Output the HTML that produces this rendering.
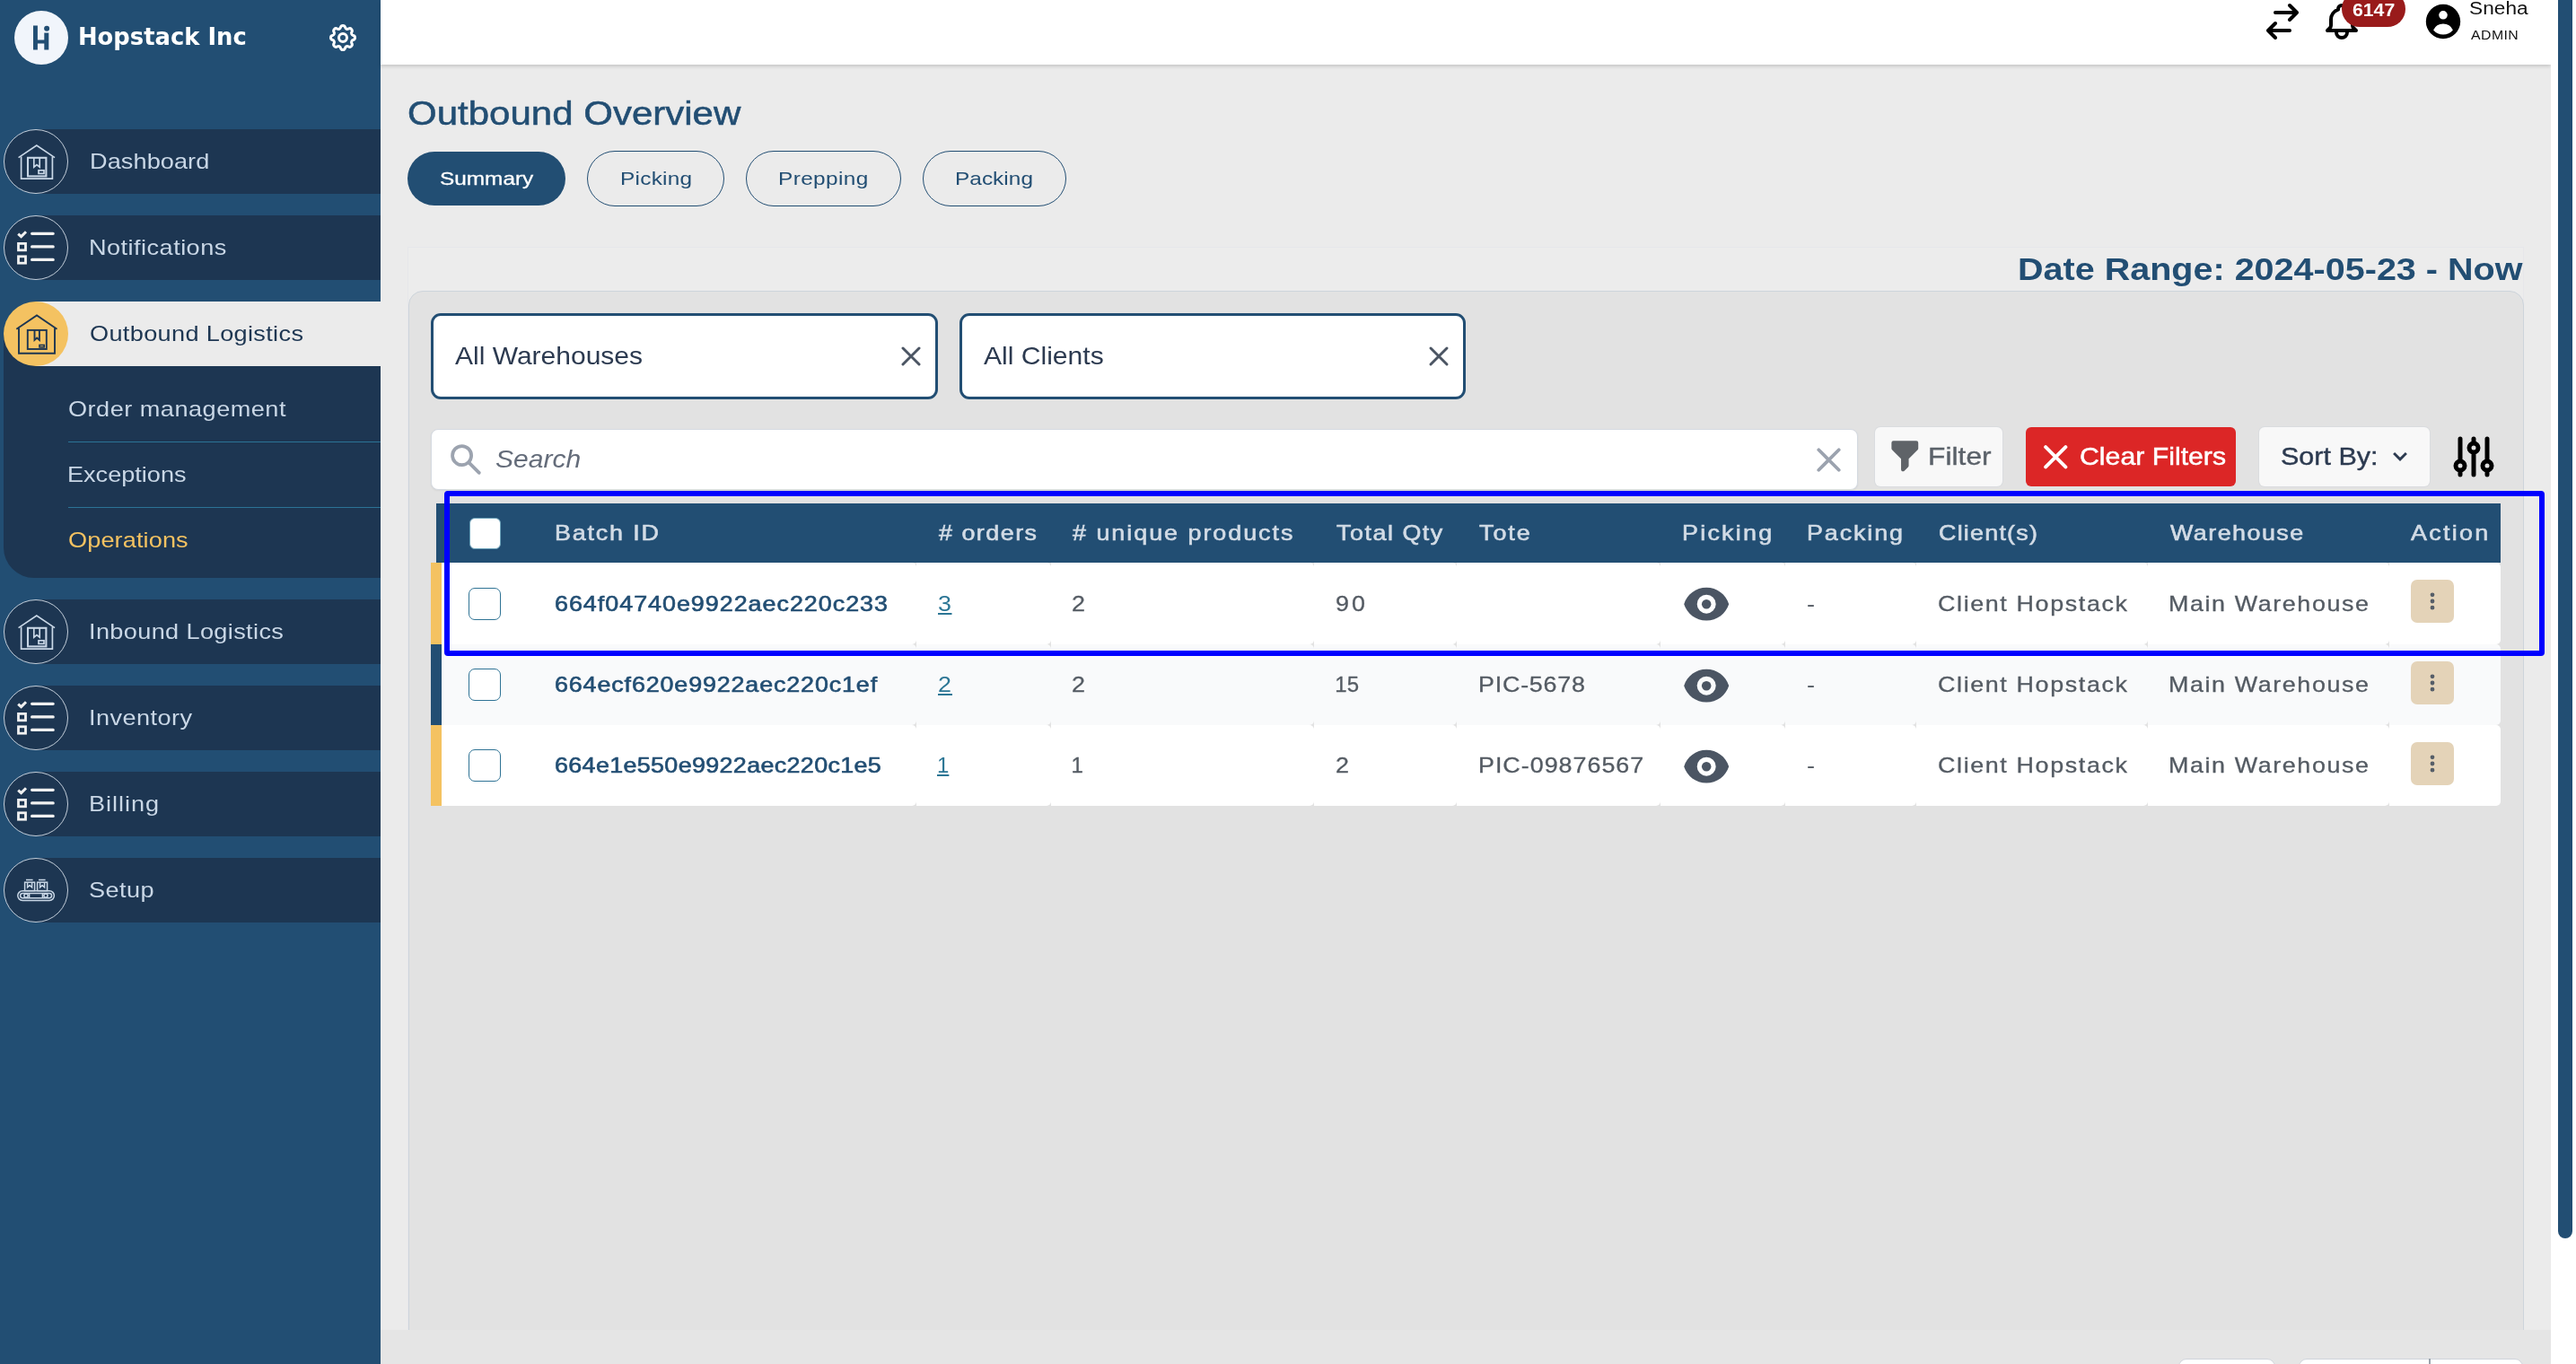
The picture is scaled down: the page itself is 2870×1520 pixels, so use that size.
<!DOCTYPE html>
<html lang="en"><head><meta charset="utf-8"><title>Outbound Overview - Hopstack Inc</title>
<style>
html,body{margin:0;padding:0}
body{width:2870px;height:1520px;overflow:hidden;background:#fff;position:relative;font-family:"Liberation Sans",sans-serif}
.a,.t,svg.i{position:absolute}
.t{white-space:nowrap;line-height:1;transform-origin:0 50%}
.a{box-sizing:border-box}
svg.i{overflow:visible}
#app{position:absolute;left:0;top:0;width:2870px;height:1520px;overflow:hidden;will-change:transform}
@media (max-width:2000px){#app{zoom:.5}body{width:1435px;height:760px}}

</style></head>
<body>
<div id="app">
<div class="a" style="left:424px;top:0;width:2418px;height:1520px;background:#ebebeb"></div>
<div class="a" style="left:0;top:0;width:424px;height:1520px;background:#224e73"></div>
<div class="a" style="left:16px;top:12px;width:60px;height:60px;border-radius:50%;background:#f1f5fb"></div>
<svg class="i" style="left:16px;top:12px" width="60" height="60" viewBox="16 12 60 60"><g fill="#224e73"><rect x="37" y="28.5" width="4.9" height="27"/><rect x="49.3" y="36.6" width="5" height="18.9"/><rect x="41" y="44.5" width="9" height="4"/><circle cx="52.1" cy="31.7" r="3"/></g></svg>
<span class="t" style="left:87.0px;top:26.9px;font-size:27px;color:#fff;font-family:'DejaVu Sans','Liberation Sans',sans-serif;font-weight:700;transform:scaleX(0.9562);">Hopstack Inc</span>
<svg class="i" style="left:364px;top:24px" width="36" height="36" viewBox="0 0 24 24" fill="none" stroke="#fff" stroke-width="2" stroke-linecap="round" stroke-linejoin="round"><path d="M10.325 4.317c.426-1.756 2.924-1.756 3.35 0a1.724 1.724 0 002.573 1.066c1.543-.94 3.31.826 2.37 2.37a1.724 1.724 0 001.065 2.572c1.756.426 1.756 2.924 0 3.35a1.724 1.724 0 00-1.066 2.573c.94 1.543-.826 3.31-2.37 2.37a1.724 1.724 0 00-2.572 1.065c-.426 1.756-2.924 1.756-3.35 0a1.724 1.724 0 00-2.573-1.066c-1.543.94-3.31-.826-2.37-2.37a1.724 1.724 0 00-1.065-2.572c-1.756-.426-1.756-2.924 0-3.35a1.724 1.724 0 001.066-2.573c-.94-1.543.826-3.31 2.37-2.37.996.608 2.296.07 2.572-1.065z"/><path d="M15 12a3 3 0 11-6 0 3 3 0 016 0z"/></svg>
<div class="a" style="left:40px;top:144px;width:384px;height:72px;background:#1d3652"></div>
<div class="a" style="left:4px;top:144px;width:72px;height:72px;border-radius:50%;background:#1d3652;border:1.4px solid #c4cfdb"></div>
<svg class="i" style="left:4px;top:144px" width="72" height="72" viewBox="4 144 72 72" fill="none" stroke="#c9d7e6" stroke-width="1.7" stroke-linejoin="miter"><g><path d="M20.6 175.6L40.8 162L61 175.6"/><path d="M23.6 174.5V199.2H58.4V174.5"/><rect x="31" y="175.8" width="20.4" height="20.6" stroke-width="2.1"/><path d="M37.8 176V186.2L41 183.6L44.2 186.2V176"/><rect x="43" y="189.8" width="6" height="3.6"/></g></svg>
<span class="t" style="left:99.7px;top:167.6px;font-size:24px;color:#c9d7e6;font-family:'Liberation Sans',sans-serif;letter-spacing:0.07px;transform:scaleX(1.1300);">Dashboard</span>
<div class="a" style="left:40px;top:240px;width:384px;height:72px;background:#1d3652"></div>
<div class="a" style="left:4px;top:240px;width:72px;height:72px;border-radius:50%;background:#1d3652;border:1.4px solid #c4cfdb"></div>
<svg class="i" style="left:4px;top:240px" width="72" height="72" viewBox="4 240 72 72" fill="none" stroke="#f1f1f1" stroke-linecap="round"><g stroke-width="3.2"><path d="M35.6 260.3H59.2M35.6 274.9H59.2M35.6 289.4H59.2"/></g><path d="M20.2 260.6L23.6 263.6L29 258.2" stroke-width="3" stroke-linecap="butt"/><rect x="20.5" y="271.4" width="8" height="7.4" stroke-width="2.8"/><rect x="20.5" y="285.8" width="8" height="7.4" stroke-width="2.8"/></svg>
<span class="t" style="left:99.3px;top:263.6px;font-size:24px;color:#c9d7e6;font-family:'Liberation Sans',sans-serif;letter-spacing:0.41px;transform:scaleX(1.1300);">Notifications</span>
<div class="a" style="left:4px;top:372px;width:420px;height:272px;background:#1d3652;border-bottom-left-radius:34px"></div>
<div class="a" style="left:40px;top:336px;width:384px;height:72px;background:#ebebeb"></div>
<div class="a" style="left:4px;top:336px;width:72px;height:72px;border-radius:50%;background:#f4c261"></div>
<svg class="i" style="left:4px;top:336px" width="72" height="72" viewBox="4 336 72 72" fill="none" stroke="#1d3652" stroke-width="1.9" stroke-linejoin="miter"><path d="M18.3 366.7L41 351.4L63.5 366.7"/><path d="M21 365.6V393.8H61V365.6"/><rect x="30.8" y="367.9" width="21" height="21.1"/><path d="M38.5 368V378.9L41.2 376.5L43.9 378.9V368"/><rect x="44" y="384.5" width="5.2" height="2.4" stroke-width="1.6"/></svg>
<span class="t" style="left:99.8px;top:359.6px;font-size:24px;color:#1d3652;font-family:'Liberation Sans',sans-serif;letter-spacing:0.30px;transform:scaleX(1.1300);">Outbound Logistics</span>
<span class="t" style="left:75.7px;top:443.7px;font-size:24px;color:#c9d7e6;font-family:'Liberation Sans',sans-serif;letter-spacing:0.43px;transform:scaleX(1.1300);">Order management</span>
<span class="t" style="left:75.4px;top:516.7px;font-size:24px;color:#c9d7e6;font-family:'Liberation Sans',sans-serif;transform:scaleX(1.1286);">Exceptions</span>
<span class="t" style="left:75.7px;top:589.7px;font-size:24px;color:#f4c261;font-family:'Liberation Sans',sans-serif;letter-spacing:0.10px;transform:scaleX(1.1300);">Operations</span>
<div class="a" style="left:76px;top:491.8px;width:348px;height:1.6px;background:#2b7396"></div>
<div class="a" style="left:76px;top:564.8px;width:348px;height:1.6px;background:#2b7396"></div>
<div class="a" style="left:40px;top:668px;width:384px;height:72px;background:#1d3652"></div>
<div class="a" style="left:4px;top:668px;width:72px;height:72px;border-radius:50%;background:#1d3652;border:1.4px solid #c4cfdb"></div>
<svg class="i" style="left:4px;top:668px" width="72" height="72" viewBox="4 668 72 72" fill="none" stroke="#c9d7e6" stroke-width="1.7" stroke-linejoin="miter"><g><path d="M20.6 699.6L40.8 686L61 699.6"/><path d="M23.6 698.5V723.2H58.4V698.5"/><rect x="31" y="699.8" width="20.4" height="20.6" stroke-width="2.1"/><path d="M37.8 700V710.2L41 707.6L44.2 710.2V700"/><rect x="43" y="713.8" width="6" height="3.6"/></g></svg>
<span class="t" style="left:98.8px;top:691.6px;font-size:24px;color:#c9d7e6;font-family:'Liberation Sans',sans-serif;letter-spacing:0.32px;transform:scaleX(1.1300);">Inbound Logistics</span>
<div class="a" style="left:40px;top:764px;width:384px;height:72px;background:#1d3652"></div>
<div class="a" style="left:4px;top:764px;width:72px;height:72px;border-radius:50%;background:#1d3652;border:1.4px solid #c4cfdb"></div>
<svg class="i" style="left:4px;top:764px" width="72" height="72" viewBox="4 764 72 72" fill="none" stroke="#f1f1f1" stroke-linecap="round"><g stroke-width="3.2"><path d="M35.6 784.3H59.2M35.6 798.9H59.2M35.6 813.4H59.2"/></g><path d="M20.2 784.6L23.6 787.6L29 782.2" stroke-width="3" stroke-linecap="butt"/><rect x="20.5" y="795.4" width="8" height="7.4" stroke-width="2.8"/><rect x="20.5" y="809.8" width="8" height="7.4" stroke-width="2.8"/></svg>
<span class="t" style="left:98.8px;top:787.6px;font-size:24px;color:#c9d7e6;font-family:'Liberation Sans',sans-serif;letter-spacing:0.38px;transform:scaleX(1.1300);">Inventory</span>
<div class="a" style="left:40px;top:860px;width:384px;height:72px;background:#1d3652"></div>
<div class="a" style="left:4px;top:860px;width:72px;height:72px;border-radius:50%;background:#1d3652;border:1.4px solid #c4cfdb"></div>
<svg class="i" style="left:4px;top:860px" width="72" height="72" viewBox="4 860 72 72" fill="none" stroke="#f1f1f1" stroke-linecap="round"><g stroke-width="3.2"><path d="M35.6 880.3H59.2M35.6 894.9H59.2M35.6 909.4H59.2"/></g><path d="M20.2 880.6L23.6 883.6L29 878.2" stroke-width="3" stroke-linecap="butt"/><rect x="20.5" y="891.4" width="8" height="7.4" stroke-width="2.8"/><rect x="20.5" y="905.8" width="8" height="7.4" stroke-width="2.8"/></svg>
<span class="t" style="left:99.0px;top:883.6px;font-size:24px;color:#c9d7e6;font-family:'Liberation Sans',sans-serif;letter-spacing:0.86px;transform:scaleX(1.1300);">Billing</span>
<div class="a" style="left:40px;top:956px;width:384px;height:72px;background:#1d3652"></div>
<div class="a" style="left:4px;top:956px;width:72px;height:72px;border-radius:50%;background:#1d3652;border:1.4px solid #c4cfdb"></div>
<svg class="i" style="left:4px;top:956px" width="72" height="72" viewBox="4 956 72 72" fill="none" stroke="#c9d7e6" stroke-width="1.5"><rect x="19.8" y="992.8" width="40.6" height="10.6" rx="5.3"/><rect x="22.6" y="995.4" width="35" height="5.4" rx="2.7"/><circle cx="29" cy="998.1" r="2.1"/><circle cx="51" cy="998.1" r="2.1"/><path d="M32.6 995.4V1000.8M47.4 995.4V1000.8"/><rect x="27.6" y="983.2" width="11" height="9.4"/><rect x="41.6" y="983.2" width="11" height="9.4"/><path d="M30.6 983.4V988.8L33.1 986.6L35.6 988.8V983.4M44.6 983.4V988.8L47.1 986.6L49.6 988.8V983.4"/><path d="M29 980.6H36.6M43 980.6H50.6"/></svg>
<span class="t" style="left:99.4px;top:979.6px;font-size:24px;color:#c9d7e6;font-family:'Liberation Sans',sans-serif;letter-spacing:0.39px;transform:scaleX(1.1300);">Setup</span>
<div class="a" style="left:424px;top:0;width:2418px;height:72px;background:#fff;box-shadow:0 2px 4px rgba(0,0,0,.16)"></div>
<svg class="i" style="left:2519px;top:0" width="48" height="48" viewBox="0 0 24 24" fill="none" stroke="#000" stroke-width="2" stroke-linecap="round" stroke-linejoin="round"><path d="M8 7h12m0 0l-4-4m4 4l-4 4m0 6H4m0 0l4 4m-4-4l4-4"/></svg>
<svg class="i" style="left:2585px;top:0" width="48" height="48" viewBox="0 0 24 24" fill="none" stroke="#000" stroke-width="2" stroke-linecap="round" stroke-linejoin="round"><path d="M15 17h5l-1.405-1.405A2.032 2.032 0 0118 14.158V11a6.002 6.002 0 00-4-5.659V5a2 2 0 10-4 0v.341C7.67 6.165 6 8.388 6 11v3.159c0 .538-.214 1.055-.595 1.436L4 17h5m6 0v1a3 3 0 11-6 0v-1m6 0H9"/></svg>
<div class="a" style="left:2609px;top:-10px;width:71px;height:40px;border-radius:20px;background:#991b1b"></div>
<span class="t" style="left:2620.8px;top:1.4px;font-size:20px;color:#fff;font-family:'Liberation Sans',sans-serif;font-weight:700;transform:scaleX(1.0606);">6147</span>
<svg class="i" style="left:2698px;top:0" width="48" height="48" viewBox="0 0 20 20" fill="#000"><path fill-rule="evenodd" clip-rule="evenodd" d="M18 10a8 8 0 11-16 0 8 8 0 0116 0zm-6-3a2 2 0 11-4 0 2 2 0 014 0zm-2 4a5 5 0 00-4.546 2.916A5.986 5.986 0 0010 16a5.986 5.986 0 004.546-2.084A5 5 0 0010 11z"/></svg>
<span class="t" style="left:2751.0px;top:-0.9px;font-size:20px;color:#111;font-family:'Liberation Sans',sans-serif;letter-spacing:0.05px;transform:scaleX(1.1300);">Sneha</span>
<span class="t" style="left:2752.5px;top:31.9px;font-size:14px;color:#111;font-family:'Liberation Sans',sans-serif;letter-spacing:0.40px;transform:scaleX(1.1300);">ADMIN</span>
<div class="a" style="left:2842px;top:0;width:28px;height:1520px;background:#fff"></div>
<div class="a" style="left:2850px;top:-20px;width:16px;height:1400px;border-radius:8px;background:#224e73"></div>
<span class="t" style="left:453.9px;top:109.1px;font-size:36px;color:#224e73;font-family:'Liberation Sans',sans-serif;transform:scaleX(1.1670);-webkit-text-stroke:0.5px #224e73;">Outbound Overview</span>
<div class="a" style="left:454px;top:169px;width:176px;height:60px;border-radius:30px;background:#224e73"></div>
<span class="t" style="left:489.6px;top:188.1px;font-size:21px;color:#fff;font-family:'Liberation Sans',sans-serif;letter-spacing:0.01px;transform:scaleX(1.1600);-webkit-text-stroke:0.3px #fff;">Summary</span>
<div class="a" style="left:654px;top:168px;width:153px;height:62px;border-radius:31px;border:1.5px solid #224e73"></div>
<span class="t" style="left:690.5px;top:188.1px;font-size:21px;color:#224e73;font-family:'Liberation Sans',sans-serif;letter-spacing:0.23px;transform:scaleX(1.1600);">Picking</span>
<div class="a" style="left:831px;top:168px;width:173px;height:62px;border-radius:31px;border:1.5px solid #224e73"></div>
<span class="t" style="left:867.1px;top:188.1px;font-size:21px;color:#224e73;font-family:'Liberation Sans',sans-serif;letter-spacing:0.34px;transform:scaleX(1.1600);">Prepping</span>
<div class="a" style="left:1028px;top:168px;width:159.5px;height:62px;border-radius:31px;border:1.5px solid #224e73"></div>
<span class="t" style="left:1063.8px;top:188.1px;font-size:21px;color:#224e73;font-family:'Liberation Sans',sans-serif;letter-spacing:0.04px;transform:scaleX(1.1600);">Packing</span>
<div class="a" style="left:454px;top:275px;width:2358px;height:1260px;border:1px solid #e6e7ea;background:#ececec"></div>
<span class="t" style="left:2248.4px;top:282.9px;font-size:35.5px;color:#224e73;font-family:'Liberation Sans',sans-serif;font-weight:700;transform:scaleX(1.1136);">Date Range: 2024-05-23 - Now</span>
<div class="a" style="left:455px;top:324px;width:2356.5px;height:1200px;border:1px solid #cdd4db;border-radius:16px;background:#e2e2e2"></div>
<div class="a" style="left:480px;top:349px;width:565px;height:96px;border:3.4px solid #224e73;border-radius:11px;background:#fff"></div>
<span class="t" style="left:507.0px;top:383.2px;font-size:28px;color:#2c3a50;font-family:'Liberation Sans',sans-serif;transform:scaleX(1.0719);">All Warehouses</span>
<svg class="i" style="left:997.2px;top:379.4px" width="36" height="36" viewBox="0 0 24 24" fill="none" stroke="#4b5563" stroke-width="2" stroke-linecap="round" stroke-linejoin="round"><path d="M6 18L18 6M6 6l12 12"/></svg>
<div class="a" style="left:1069px;top:349px;width:564px;height:96px;border:3.4px solid #224e73;border-radius:11px;background:#fff"></div>
<span class="t" style="left:1095.7px;top:383.2px;font-size:28px;color:#2c3a50;font-family:'Liberation Sans',sans-serif;transform:scaleX(1.0739);">All Clients</span>
<svg class="i" style="left:1584.9px;top:379.4px" width="36" height="36" viewBox="0 0 24 24" fill="none" stroke="#4b5563" stroke-width="2" stroke-linecap="round" stroke-linejoin="round"><path d="M6 18L18 6M6 6l12 12"/></svg>
<div class="a" style="left:480px;top:477.5px;width:1590px;height:68.5px;border:1px solid #d5dae1;border-radius:8px;background:#fff;box-shadow:0 1px 2px rgba(0,0,0,.06)"></div>
<svg class="i" style="left:499px;top:492px" width="40" height="40" viewBox="499 492 40 40" fill="none" stroke="#9ca3af" stroke-width="3.8" stroke-linecap="round"><circle cx="514.6" cy="507.6" r="10.5"/><path d="M522.3 515.3L533.8 526.8"/></svg>
<span class="t" style="left:552.4px;top:497.9px;font-size:28px;color:#646c7a;font-family:'Liberation Sans',sans-serif;font-style:italic;transform:scaleX(1.0723);">Search</span>
<svg class="i" style="left:2014.5px;top:489.5px" width="45" height="45" viewBox="0 0 24 24" fill="none" stroke="#9ca3af" stroke-width="2" stroke-linecap="round" stroke-linejoin="round"><path d="M6 18L18 6M6 6l12 12"/></svg>
<div class="a" style="left:2089px;top:476px;width:142px;height:66px;border-radius:6px;background:#f8f8f8;box-shadow:0 0 0 1px rgba(150,170,200,.1)"></div>
<svg class="i" style="left:2100.7px;top:487.4px" width="42.6" height="42.6" viewBox="0 0 20 20" fill="#5f6368"><path fill-rule="evenodd" clip-rule="evenodd" d="M3 3a1 1 0 011-1h12a1 1 0 011 1v3a1 1 0 01-.293.707L12 11.414V15a1 1 0 01-.293.707l-2 2A1 1 0 018 17v-5.586L3.293 6.707A1 1 0 013 6V3z"/></svg>
<span class="t" style="left:2148.2px;top:494.7px;font-size:28px;color:#5a6169;font-family:'Liberation Sans',sans-serif;letter-spacing:0.05px;transform:scaleX(1.1300);-webkit-text-stroke:0.4px #5a6169;">Filter</span>
<div class="a" style="left:2257px;top:476px;width:234px;height:66px;border-radius:6px;background:#dc2626"></div>
<svg class="i" style="left:2267.75px;top:486.75px" width="44.5" height="44.5" viewBox="0 0 24 24" fill="none" stroke="#fff" stroke-width="2.1" stroke-linecap="round" stroke-linejoin="round"><path d="M6 18L18 6M6 6l12 12"/></svg>
<span class="t" style="left:2316.7px;top:494.6px;font-size:28px;color:#fff;font-family:'Liberation Sans',sans-serif;transform:scaleX(1.0805);-webkit-text-stroke:0.5px #fff;">Clear Filters</span>
<div class="a" style="left:2517px;top:476px;width:190px;height:66px;border-radius:6px;background:#f8f8f8;box-shadow:0 0 0 1px rgba(150,170,200,.1)"></div>
<span class="t" style="left:2540.8px;top:494.7px;font-size:28px;color:#2c3a50;font-family:'Liberation Sans',sans-serif;transform:scaleX(1.0894);-webkit-text-stroke:0.4px #2c3a50;">Sort By:</span>
<svg class="i" style="left:2660px;top:498px" width="28" height="22" viewBox="2660 498 28 22" fill="none" stroke="#2c3a50" stroke-width="2.9" stroke-linecap="butt" stroke-linejoin="miter"><path d="M2667.1 505 L2674 511.9 L2680.9 505"/></svg>
<svg class="i" style="left:2725.8px;top:478.8px" width="60" height="60" viewBox="0 0 24 24" fill="none" stroke="#000" stroke-width="2" stroke-linecap="round" stroke-linejoin="round"><path d="M12 6V4m0 2a2 2 0 100 4m0-4a2 2 0 110 4m-6 8a2 2 0 100-4m0 4a2 2 0 110-4m0 4v2m0-6V4m6 6v10m6-2a2 2 0 100-4m0 4a2 2 0 110-4m0 4v2m0-6V4"/></svg>
<div class="a" style="left:486px;top:561px;width:2300px;height:66px;background:#224e73"></div>
<div class="a" style="left:522.5px;top:576.5px;width:35px;height:35px;border-radius:6px;background:#fff;border:1px solid #6aa0b8"></div>
<span class="t" style="left:617.6px;top:581.5px;font-size:24px;color:#d3dce6;font-family:'Liberation Sans',sans-serif;letter-spacing:1.63px;transform:scaleX(1.1200);-webkit-text-stroke:0.6px #d3dce6;">Batch ID</span>
<span class="t" style="left:1046.2px;top:581.5px;font-size:24px;color:#d3dce6;font-family:'Liberation Sans',sans-serif;letter-spacing:1.33px;transform:scaleX(1.1200);-webkit-text-stroke:0.6px #d3dce6;"># orders</span>
<span class="t" style="left:1195.2px;top:581.5px;font-size:24px;color:#d3dce6;font-family:'Liberation Sans',sans-serif;letter-spacing:1.77px;transform:scaleX(1.1200);-webkit-text-stroke:0.6px #d3dce6;"># unique products</span>
<span class="t" style="left:1488.7px;top:581.5px;font-size:24px;color:#d3dce6;font-family:'Liberation Sans',sans-serif;letter-spacing:1.36px;transform:scaleX(1.1200);-webkit-text-stroke:0.6px #d3dce6;">Total Qty</span>
<span class="t" style="left:1647.8px;top:581.5px;font-size:24px;color:#d3dce6;font-family:'Liberation Sans',sans-serif;letter-spacing:1.75px;transform:scaleX(1.1200);-webkit-text-stroke:0.6px #d3dce6;">Tote</span>
<span class="t" style="left:1874.3px;top:581.5px;font-size:24px;color:#d3dce6;font-family:'Liberation Sans',sans-serif;letter-spacing:2.01px;transform:scaleX(1.1200);-webkit-text-stroke:0.6px #d3dce6;">Picking</span>
<span class="t" style="left:2013.2px;top:581.5px;font-size:24px;color:#d3dce6;font-family:'Liberation Sans',sans-serif;letter-spacing:1.68px;transform:scaleX(1.1200);-webkit-text-stroke:0.6px #d3dce6;">Packing</span>
<span class="t" style="left:2159.6px;top:581.5px;font-size:24px;color:#d3dce6;font-family:'Liberation Sans',sans-serif;letter-spacing:1.10px;transform:scaleX(1.1200);-webkit-text-stroke:0.6px #d3dce6;">Client(s)</span>
<span class="t" style="left:2418.2px;top:581.5px;font-size:24px;color:#d3dce6;font-family:'Liberation Sans',sans-serif;letter-spacing:1.31px;transform:scaleX(1.1200);-webkit-text-stroke:0.6px #d3dce6;">Warehouse</span>
<span class="t" style="left:2686.2px;top:581.5px;font-size:24px;color:#d3dce6;font-family:'Liberation Sans',sans-serif;letter-spacing:2.04px;transform:scaleX(1.1200);-webkit-text-stroke:0.6px #d3dce6;">Action</span>
<div class="a" style="left:480px;top:627px;width:12px;height:90.5px;background:#f4c261"></div>
<div class="a" style="left:492px;top:627px;width:529px;height:90.5px;background:#fff;border-radius:0 5px 5px 0"></div>
<div class="a" style="left:1021px;top:627px;width:149.5px;height:90.5px;background:#fff;border-radius:0 5px 5px 0"></div>
<div class="a" style="left:1170.5px;top:627px;width:293.5px;height:90.5px;background:#fff;border-radius:0 5px 5px 0"></div>
<div class="a" style="left:1464px;top:627px;width:159px;height:90.5px;background:#fff;border-radius:0 5px 5px 0"></div>
<div class="a" style="left:1623px;top:627px;width:227px;height:90.5px;background:#fff;border-radius:0 5px 5px 0"></div>
<div class="a" style="left:1850px;top:627px;width:139px;height:90.5px;background:#fff;border-radius:0 5px 5px 0"></div>
<div class="a" style="left:1989px;top:627px;width:146px;height:90.5px;background:#fff;border-radius:0 5px 5px 0"></div>
<div class="a" style="left:2135px;top:627px;width:257.5px;height:90.5px;background:#fff;border-radius:0 5px 5px 0"></div>
<div class="a" style="left:2392.5px;top:627px;width:269.0px;height:90.5px;background:#fff;border-radius:0 5px 5px 0"></div>
<div class="a" style="left:2661.5px;top:627px;width:124.5px;height:90.5px;background:#fff;border-radius:0 5px 5px 0"></div>
<div class="a" style="left:522px;top:654.5px;width:36px;height:36px;border-radius:7px;background:#fff;border:1.5px solid #2f7395"></div>
<span class="t" style="left:617.8px;top:660.9px;font-size:24px;color:#224e73;font-family:'Liberation Sans',sans-serif;letter-spacing:0.88px;transform:scaleX(1.1200);-webkit-text-stroke:0.6px #224e73;">664f04740e9922aec220c233</span>
<span class="t" style="left:1044.8px;top:660.9px;font-size:24px;color:#2c7695;font-family:'Liberation Sans',sans-serif;letter-spacing:0.47px;transform:scaleX(1.1200);text-decoration:underline;text-decoration-thickness:2px;text-underline-offset:2px;">3</span>
<span class="t" style="left:1193.8px;top:660.9px;font-size:24px;color:#545b63;font-family:'Liberation Sans',sans-serif;letter-spacing:0.63px;transform:scaleX(1.1200);-webkit-text-stroke:0.3px #545b63;">2</span>
<span class="t" style="left:1487.8px;top:660.9px;font-size:24px;color:#545b63;font-family:'Liberation Sans',sans-serif;letter-spacing:2.75px;transform:scaleX(1.1200);-webkit-text-stroke:0.3px #545b63;">90</span>
<svg class="i" style="left:1875px;top:647.1px" width="52.4" height="52.4" viewBox="0 0 20 20" fill="#4b5563"><path d="M10 12a2 2 0 100-4 2 2 0 000 4z"/><path fill-rule="evenodd" clip-rule="evenodd" d="M.458 10C1.732 5.943 5.522 3 10 3s8.268 2.943 9.542 7c-1.274 4.057-5.064 7-9.542 7S1.732 14.057.458 10zM14 10a4 4 0 11-8 0 4 4 0 018 0z"/></svg>
<span class="t" style="left:2013.3px;top:660.9px;font-size:24px;color:#545b63;font-family:'Liberation Sans',sans-serif;letter-spacing:0.70px;transform:scaleX(1.1300);">-</span>
<span class="t" style="left:2159.2px;top:660.9px;font-size:24px;color:#545b63;font-family:'Liberation Sans',sans-serif;letter-spacing:1.45px;transform:scaleX(1.1200);-webkit-text-stroke:0.3px #545b63;">Client Hopstack</span>
<span class="t" style="left:2416.0px;top:660.9px;font-size:24px;color:#545b63;font-family:'Liberation Sans',sans-serif;letter-spacing:1.43px;transform:scaleX(1.1200);-webkit-text-stroke:0.3px #545b63;">Main Warehouse</span>
<div class="a" style="left:2686px;top:646.0px;width:48px;height:48px;border-radius:7px;background:#e4d3b8"></div>
<svg class="i" style="left:2698px;top:658.0px" width="24" height="24" viewBox="0 0 20 20" fill="#565e68"><path d="M10 6a2 2 0 110-4 2 2 0 010 4zM10 12a2 2 0 110-4 2 2 0 010 4zM10 18a2 2 0 110-4 2 2 0 010 4z"/></svg>
<div class="a" style="left:480px;top:717.5px;width:12px;height:90.5px;background:#224e73"></div>
<div class="a" style="left:492px;top:717.5px;width:529px;height:90.5px;background:#f9fafb;border-radius:0 5px 5px 0"></div>
<div class="a" style="left:1021px;top:717.5px;width:149.5px;height:90.5px;background:#f9fafb;border-radius:0 5px 5px 0"></div>
<div class="a" style="left:1170.5px;top:717.5px;width:293.5px;height:90.5px;background:#f9fafb;border-radius:0 5px 5px 0"></div>
<div class="a" style="left:1464px;top:717.5px;width:159px;height:90.5px;background:#f9fafb;border-radius:0 5px 5px 0"></div>
<div class="a" style="left:1623px;top:717.5px;width:227px;height:90.5px;background:#f9fafb;border-radius:0 5px 5px 0"></div>
<div class="a" style="left:1850px;top:717.5px;width:139px;height:90.5px;background:#f9fafb;border-radius:0 5px 5px 0"></div>
<div class="a" style="left:1989px;top:717.5px;width:146px;height:90.5px;background:#f9fafb;border-radius:0 5px 5px 0"></div>
<div class="a" style="left:2135px;top:717.5px;width:257.5px;height:90.5px;background:#f9fafb;border-radius:0 5px 5px 0"></div>
<div class="a" style="left:2392.5px;top:717.5px;width:269.0px;height:90.5px;background:#f9fafb;border-radius:0 5px 5px 0"></div>
<div class="a" style="left:2661.5px;top:717.5px;width:124.5px;height:90.5px;background:#f9fafb;border-radius:0 5px 5px 0"></div>
<div class="a" style="left:522px;top:745.0px;width:36px;height:36px;border-radius:7px;background:#fff;border:1.5px solid #2f7395"></div>
<span class="t" style="left:617.8px;top:751.4px;font-size:24px;color:#224e73;font-family:'Liberation Sans',sans-serif;letter-spacing:0.77px;transform:scaleX(1.1200);-webkit-text-stroke:0.6px #224e73;">664ecf620e9922aec220c1ef</span>
<span class="t" style="left:1044.5px;top:751.4px;font-size:24px;color:#2c7695;font-family:'Liberation Sans',sans-serif;letter-spacing:0.89px;transform:scaleX(1.1200);text-decoration:underline;text-decoration-thickness:2px;text-underline-offset:2px;">2</span>
<span class="t" style="left:1193.8px;top:751.4px;font-size:24px;color:#545b63;font-family:'Liberation Sans',sans-serif;letter-spacing:0.63px;transform:scaleX(1.1200);-webkit-text-stroke:0.3px #545b63;">2</span>
<span class="t" style="left:1487.3px;top:751.4px;font-size:24px;color:#545b63;font-family:'Liberation Sans',sans-serif;-webkit-text-stroke:0.3px #545b63;">15</span>
<span class="t" style="left:1646.7px;top:751.4px;font-size:24px;color:#545b63;font-family:'Liberation Sans',sans-serif;letter-spacing:0.69px;transform:scaleX(1.1200);-webkit-text-stroke:0.3px #545b63;">PIC-5678</span>
<svg class="i" style="left:1875px;top:737.6px" width="52.4" height="52.4" viewBox="0 0 20 20" fill="#4b5563"><path d="M10 12a2 2 0 100-4 2 2 0 000 4z"/><path fill-rule="evenodd" clip-rule="evenodd" d="M.458 10C1.732 5.943 5.522 3 10 3s8.268 2.943 9.542 7c-1.274 4.057-5.064 7-9.542 7S1.732 14.057.458 10zM14 10a4 4 0 11-8 0 4 4 0 018 0z"/></svg>
<span class="t" style="left:2013.3px;top:751.4px;font-size:24px;color:#545b63;font-family:'Liberation Sans',sans-serif;letter-spacing:0.70px;transform:scaleX(1.1300);">-</span>
<span class="t" style="left:2159.2px;top:751.4px;font-size:24px;color:#545b63;font-family:'Liberation Sans',sans-serif;letter-spacing:1.45px;transform:scaleX(1.1200);-webkit-text-stroke:0.3px #545b63;">Client Hopstack</span>
<span class="t" style="left:2416.0px;top:751.4px;font-size:24px;color:#545b63;font-family:'Liberation Sans',sans-serif;letter-spacing:1.43px;transform:scaleX(1.1200);-webkit-text-stroke:0.3px #545b63;">Main Warehouse</span>
<div class="a" style="left:2686px;top:736.5px;width:48px;height:48px;border-radius:7px;background:#e4d3b8"></div>
<svg class="i" style="left:2698px;top:748.5px" width="24" height="24" viewBox="0 0 20 20" fill="#565e68"><path d="M10 6a2 2 0 110-4 2 2 0 010 4zM10 12a2 2 0 110-4 2 2 0 010 4zM10 18a2 2 0 110-4 2 2 0 010 4z"/></svg>
<div class="a" style="left:480px;top:807.5px;width:12px;height:90.5px;background:#f4c261"></div>
<div class="a" style="left:492px;top:807.5px;width:529px;height:90.5px;background:#fff;border-radius:0 5px 5px 0"></div>
<div class="a" style="left:1021px;top:807.5px;width:149.5px;height:90.5px;background:#fff;border-radius:0 5px 5px 0"></div>
<div class="a" style="left:1170.5px;top:807.5px;width:293.5px;height:90.5px;background:#fff;border-radius:0 5px 5px 0"></div>
<div class="a" style="left:1464px;top:807.5px;width:159px;height:90.5px;background:#fff;border-radius:0 5px 5px 0"></div>
<div class="a" style="left:1623px;top:807.5px;width:227px;height:90.5px;background:#fff;border-radius:0 5px 5px 0"></div>
<div class="a" style="left:1850px;top:807.5px;width:139px;height:90.5px;background:#fff;border-radius:0 5px 5px 0"></div>
<div class="a" style="left:1989px;top:807.5px;width:146px;height:90.5px;background:#fff;border-radius:0 5px 5px 0"></div>
<div class="a" style="left:2135px;top:807.5px;width:257.5px;height:90.5px;background:#fff;border-radius:0 5px 5px 0"></div>
<div class="a" style="left:2392.5px;top:807.5px;width:269.0px;height:90.5px;background:#fff;border-radius:0 5px 5px 0"></div>
<div class="a" style="left:2661.5px;top:807.5px;width:124.5px;height:90.5px;background:#fff;border-radius:0 5px 5px 0"></div>
<div class="a" style="left:522px;top:835.0px;width:36px;height:36px;border-radius:7px;background:#fff;border:1.5px solid #2f7395"></div>
<span class="t" style="left:617.8px;top:841.4px;font-size:24px;color:#224e73;font-family:'Liberation Sans',sans-serif;letter-spacing:0.31px;transform:scaleX(1.1200);-webkit-text-stroke:0.6px #224e73;">664e1e550e9922aec220c1e5</span>
<span class="t" style="left:1044.0px;top:841.4px;font-size:24px;color:#2c7695;font-family:'Liberation Sans',sans-serif;text-decoration:underline;text-decoration-thickness:2px;text-underline-offset:2px;">1</span>
<span class="t" style="left:1193.4px;top:841.4px;font-size:24px;color:#545b63;font-family:'Liberation Sans',sans-serif;-webkit-text-stroke:0.3px #545b63;">1</span>
<span class="t" style="left:1487.7px;top:841.4px;font-size:24px;color:#545b63;font-family:'Liberation Sans',sans-serif;letter-spacing:0.63px;transform:scaleX(1.1200);-webkit-text-stroke:0.3px #545b63;">2</span>
<span class="t" style="left:1646.7px;top:841.4px;font-size:24px;color:#545b63;font-family:'Liberation Sans',sans-serif;letter-spacing:0.88px;transform:scaleX(1.1200);-webkit-text-stroke:0.3px #545b63;">PIC-09876567</span>
<svg class="i" style="left:1875px;top:827.6px" width="52.4" height="52.4" viewBox="0 0 20 20" fill="#4b5563"><path d="M10 12a2 2 0 100-4 2 2 0 000 4z"/><path fill-rule="evenodd" clip-rule="evenodd" d="M.458 10C1.732 5.943 5.522 3 10 3s8.268 2.943 9.542 7c-1.274 4.057-5.064 7-9.542 7S1.732 14.057.458 10zM14 10a4 4 0 11-8 0 4 4 0 018 0z"/></svg>
<span class="t" style="left:2013.3px;top:841.4px;font-size:24px;color:#545b63;font-family:'Liberation Sans',sans-serif;letter-spacing:0.70px;transform:scaleX(1.1300);">-</span>
<span class="t" style="left:2159.2px;top:841.4px;font-size:24px;color:#545b63;font-family:'Liberation Sans',sans-serif;letter-spacing:1.45px;transform:scaleX(1.1200);-webkit-text-stroke:0.3px #545b63;">Client Hopstack</span>
<span class="t" style="left:2416.0px;top:841.4px;font-size:24px;color:#545b63;font-family:'Liberation Sans',sans-serif;letter-spacing:1.43px;transform:scaleX(1.1200);-webkit-text-stroke:0.3px #545b63;">Main Warehouse</span>
<div class="a" style="left:2686px;top:826.5px;width:48px;height:48px;border-radius:7px;background:#e4d3b8"></div>
<svg class="i" style="left:2698px;top:838.5px" width="24" height="24" viewBox="0 0 20 20" fill="#565e68"><path d="M10 6a2 2 0 110-4 2 2 0 010 4zM10 12a2 2 0 110-4 2 2 0 010 4zM10 18a2 2 0 110-4 2 2 0 010 4z"/></svg>
<div class="a" style="left:495px;top:547px;width:2340px;height:184px;border:6px solid #0000ff;border-radius:4px"></div>
<div class="a" style="left:424px;top:1481.7px;width:2418px;height:40px;background:#e5e5e5"></div>
<div class="a" style="left:2427px;top:1514px;width:108px;height:60px;border-radius:9px;border:1.5px solid #cfd4db;background:#fff"></div>
<div class="a" style="left:2561px;top:1514px;width:250px;height:60px;border-radius:9px;border:1.5px solid #cfd4db;background:#fff"></div>
<div class="a" style="left:2706px;top:1514px;width:1.5px;height:10px;background:#9aa3ad"></div>
</div>
</body></html>
